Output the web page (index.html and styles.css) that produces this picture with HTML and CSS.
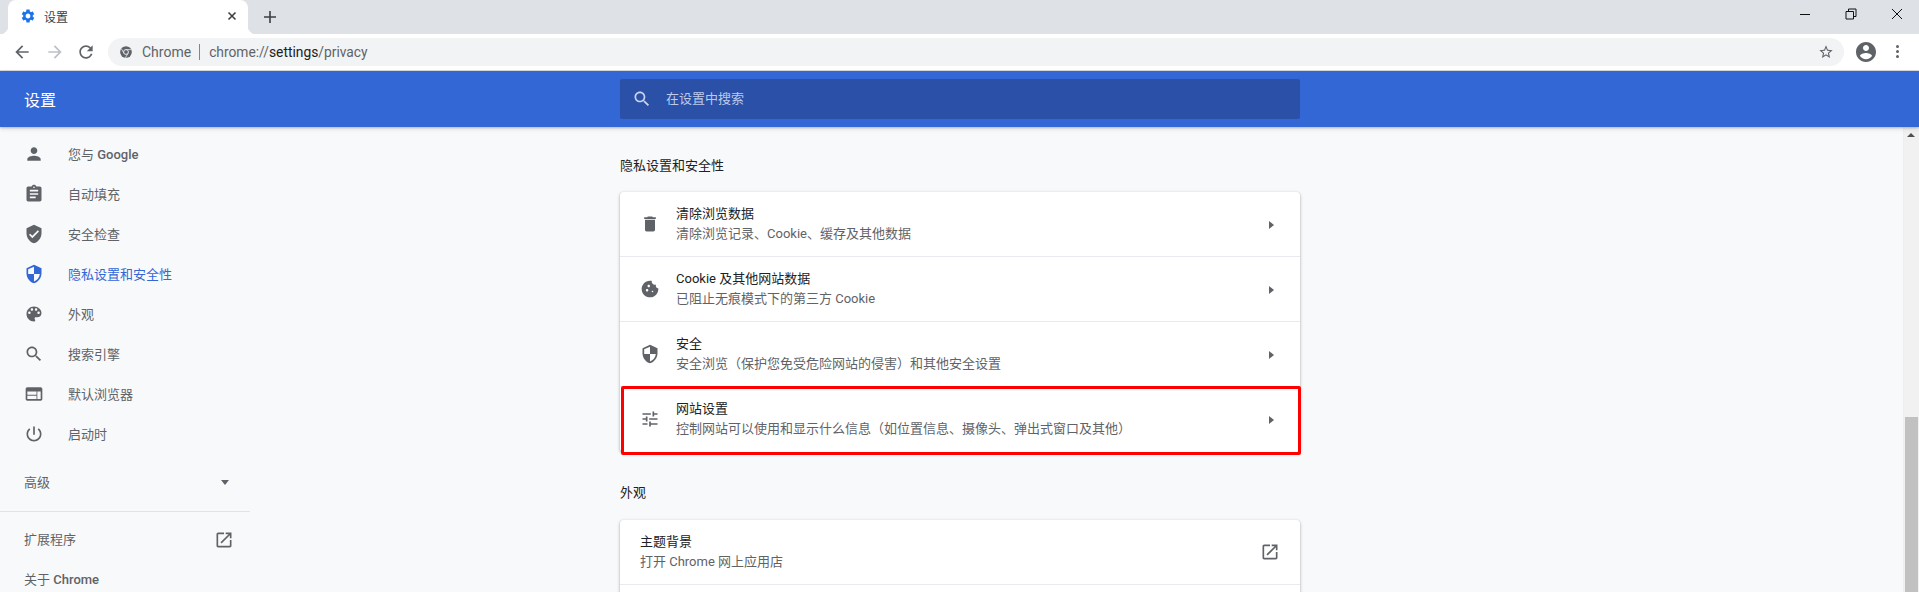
FILE: index.html
```html
<!DOCTYPE html>
<html lang="zh-CN">
<head>
  <meta charset="UTF-8">
  <title>设置</title>
  <link rel="stylesheet" href="styles.css">
</head>
<body>
  <!-- Tab strip -->
  <div class="strip">
    <div class="tab">
      <svg class="favicon" viewBox="0 0 24 24"><path d="M19.14 12.94c.04-.3.06-.61.06-.94 0-.32-.02-.64-.07-.94l2.03-1.58c.18-.14.23-.41.12-.61l-1.92-3.32c-.12-.22-.37-.29-.59-.22l-2.39.96c-.5-.38-1.03-.7-1.62-.94l-.36-2.54c-.04-.24-.24-.41-.48-.41h-3.84c-.24 0-.43.17-.47.41l-.36 2.54c-.59.24-1.13.57-1.62.94l-2.39-.96c-.22-.08-.47 0-.59.22L2.74 8.87c-.12.21-.08.47.12.61l2.03 1.58c-.05.3-.09.63-.09.94s.02.64.07.94l-2.03 1.58c-.18.14-.23.41-.12.61l1.92 3.32c.12.22.37.29.59.22l2.39-.96c.5.38 1.03.7 1.62.94l.36 2.54c.05.24.24.41.48.41h3.84c.24 0 .44-.17.47-.41l.36-2.54c.59-.24 1.13-.56 1.62-.94l2.39.96c.22.08.47 0 .59-.22l1.92-3.32c.12-.22.07-.47-.12-.61l-2.01-1.58zM12 15.6c-1.98 0-3.6-1.62-3.6-3.6s1.62-3.6 3.6-3.6 3.6 1.62 3.6 3.6-1.62 3.6-3.6 3.6z"/></svg>
      <span class="tab-title">设置</span>
      <svg class="tab-close" viewBox="0 0 10 10"><path d="M1.5 1.5l7 7M8.5 1.5l-7 7"/></svg>
    </div>
    <svg class="new-tab" viewBox="0 0 12 12"><path d="M6 0v12M0 6h12"/></svg>
    <div class="window-buttons">
      <svg viewBox="0 0 12 12"><path d="M1 6.5h10"/></svg>
      <svg viewBox="0 0 12 12"><path d="M1 3.5h7.5v7.5H1zM3.5 3.5V1H11v7.5H8.5"/></svg>
      <svg viewBox="0 0 12 12"><path d="M1 1l10 10M11 1L1 11"/></svg>
    </div>
  </div>

  <!-- Toolbar -->
  <div class="toolbar">
    <svg class="tool" viewBox="0 0 24 24"><path d="M20 11H7.83l5.59-5.59L12 4l-8 8 8 8 1.41-1.41L7.83 13H20v-2z"/></svg>
    <svg class="tool tool-off" viewBox="0 0 24 24"><path d="M4 11h12.17l-5.59-5.59L12 4l8 8-8 8-1.41-1.41L16.17 13H4v-2z"/></svg>
    <svg class="tool" viewBox="0 0 24 24"><path d="M17.65 6.35C16.2 4.9 14.21 4 12 4c-4.42 0-7.99 3.58-7.99 8s3.57 8 7.99 8c3.73 0 6.84-2.55 7.73-6h-2.08c-.82 2.33-3.04 4-5.65 4-3.31 0-6-2.69-6-6s2.69-6 6-6c1.66 0 3.14.69 4.22 1.78L13 11h7V4l-2.35 2.35z"/></svg>
    <div class="omnibox">
      <svg class="chrome-icon" viewBox="0 0 16 16">
        <circle cx="8" cy="8" r="7.8"/>
        <path class="chrome-cut" d="M8 4.8h7M5.2 9.6L1.8 3.6M10.8 9.6L7.2 15.6"/>
        <circle class="chrome-ring" cx="8" cy="8" r="3.2"/>
      </svg>
      <span class="site-name">Chrome</span>
      <span class="site-sep"></span>
      <span class="url">chrome://<b>settings</b>/privacy</span>
      <svg class="star" viewBox="0 0 24 24"><path d="M22 9.24l-7.19-.62L12 2 9.19 8.63 2 9.24l5.46 4.73L5.82 21 12 17.27 18.18 21l-1.63-7.03L22 9.24zM12 15.4l-3.76 2.27 1-4.28-3.32-2.88 4.38-.38L12 6.1l1.71 4.04 4.38.38-3.32 2.88 1 4.28L12 15.4z"/></svg>
    </div>
    <svg class="avatar" viewBox="2 2 20 20"><path d="M12 2C6.48 2 2 6.48 2 12s4.48 10 10 10 10-4.48 10-10S17.52 2 12 2zm0 3c1.66 0 3 1.34 3 3s-1.34 3-3 3-3-1.34-3-3 1.34-3 3-3zm0 14.2c-2.5 0-4.71-1.28-6-3.22.03-1.99 4-3.08 6-3.08 1.99 0 5.97 1.09 6 3.08-1.29 1.94-3.5 3.22-6 3.22z"/></svg>
    <div class="dots"><i></i><i></i><i></i></div>
  </div>

  <!-- Settings header -->
  <div class="header">
    <div class="header-title">设置</div>
    <div class="search">
      <svg viewBox="0 0 24 24"><path d="M15.5 14h-.79l-.28-.27C15.41 12.59 16 11.11 16 9.5 16 5.91 13.09 3 9.5 3S3 5.91 3 9.5 5.91 16 9.5 16c1.61 0 3.09-.59 4.23-1.57l.27.28v.79l5 4.99L20.49 19l-4.99-5zm-6 0C7.01 14 5 11.99 5 9.5S7.01 5 9.5 5 14 7.01 14 9.5 11.99 14 9.5 14z"/></svg>
      <span>在设置中搜索</span>
    </div>
  </div>

  <div class="page">
    <!-- Sidebar -->
    <div class="sidebar">
      <div class="nav-item">
        <svg viewBox="0 0 24 24"><path d="M12 12c2.21 0 4-1.79 4-4s-1.79-4-4-4-4 1.79-4 4 1.79 4 4 4zm0 2c-2.67 0-8 1.34-8 4v2h16v-2c0-2.66-5.33-4-8-4z"/></svg>
        <span>您与 <b>Google</b></span>
      </div>
      <div class="nav-item">
        <svg viewBox="0 0 24 24"><path d="M19 3h-4.18C14.4 1.84 13.3 1 12 1c-1.3 0-2.4.84-2.82 2H5c-1.1 0-2 .9-2 2v14c0 1.1.9 2 2 2h14c1.1 0 2-.9 2-2V5c0-1.1-.9-2-2-2zm-7 0c.55 0 1 .45 1 1s-.45 1-1 1-1-.45-1-1 .45-1 1-1zm2 14H7v-2h7v2zm3-4H7v-2h10v2zm0-4H7V7h10v2z"/></svg>
        <span>自动填充</span>
      </div>
      <div class="nav-item">
        <svg viewBox="0 0 24 24"><path d="M12 1L3 5v6c0 5.55 3.84 10.74 9 12 5.16-1.26 9-6.45 9-12V5l-9-4zm-2 16l-4-4 1.41-1.41L10 14.17l6.59-6.59L18 9l-8 8z"/></svg>
        <span>安全检查</span>
      </div>
      <div class="nav-item active">
        <svg viewBox="0 0 24 24"><path d="M12 1L3 5v6c0 5.55 3.84 10.74 9 12 5.16-1.26 9-6.45 9-12V5l-9-4zm0 10.99h7c-.53 4.12-3.28 7.79-7 8.94V12H5V6.3l7-3.11v8.8z"/></svg>
        <span>隐私设置和安全性</span>
      </div>
      <div class="nav-item">
        <svg viewBox="0 0 24 24"><path d="M12 3c-4.97 0-9 4.03-9 9s4.03 9 9 9c.83 0 1.5-.67 1.5-1.5 0-.39-.15-.74-.39-1.01-.23-.26-.38-.61-.38-.99 0-.83.67-1.5 1.5-1.5H16c2.76 0 5-2.24 5-5 0-4.42-4.03-8-9-8zm-5.5 9c-.83 0-1.5-.67-1.5-1.5S5.67 9 6.5 9 8 9.67 8 10.5 7.33 12 6.5 12zm3-4C8.67 8 8 7.33 8 6.5S8.67 5 9.5 5s1.5.67 1.5 1.5S10.33 8 9.5 8zm5 0c-.83 0-1.5-.67-1.5-1.5S13.67 5 14.5 5s1.5.67 1.5 1.5S15.33 8 14.5 8zm3 4c-.83 0-1.5-.67-1.5-1.5S16.67 9 17.5 9s1.5.67 1.5 1.5-.67 1.5-1.5 1.5z"/></svg>
        <span>外观</span>
      </div>
      <div class="nav-item">
        <svg viewBox="0 0 24 24"><path d="M15.5 14h-.79l-.28-.27C15.41 12.59 16 11.11 16 9.5 16 5.91 13.09 3 9.5 3S3 5.91 3 9.5 5.91 16 9.5 16c1.61 0 3.09-.59 4.23-1.57l.27.28v.79l5 4.99L20.49 19l-4.99-5zm-6 0C7.01 14 5 11.99 5 9.5S7.01 5 9.5 5 14 7.01 14 9.5 11.99 14 9.5 14z"/></svg>
        <span>搜索引擎</span>
      </div>
      <div class="nav-item">
        <svg viewBox="0 0 24 24"><path d="M20 4H4c-1.1 0-2 .9-2 2v12c0 1.1.9 2 2 2h16c1.1 0 2-.9 2-2V6c0-1.1-.9-2-2-2zm-5 14H4v-4h11v4zm0-5H4V9h11v4zm5 5h-4V9h4v9z"/></svg>
        <span>默认浏览器</span>
      </div>
      <div class="nav-item">
        <svg viewBox="0 0 24 24"><path d="M13 3h-2v10h2V3zm4.83 2.17l-1.42 1.42C17.99 7.86 19 9.81 19 12c0 3.87-3.13 7-7 7s-7-3.13-7-7c0-2.19 1.01-4.14 2.58-5.42L6.17 5.17C4.23 6.82 3 9.26 3 12c0 4.97 4.03 9 9 9s9-4.03 9-9c0-2.74-1.23-5.18-3.17-6.83z"/></svg>
        <span>启动时</span>
      </div>
      <div class="nav-advanced">
        <span>高级</span>
        <i class="caret"></i>
      </div>
      <div class="nav-group">
        <div class="nav-line">
          <span>扩展程序</span>
          <svg viewBox="0 0 24 24"><path d="M19 19H5V5h7V3H5c-1.11 0-2 .9-2 2v14c0 1.1.89 2 2 2h14c1.1 0 2-.9 2-2v-7h-2v7zM14 3v2h3.59l-9.83 9.83 1.41 1.41L19 6.41V10h2V3h-7z"/></svg>
        </div>
        <div class="nav-line">
          <span>关于 <b>Chrome</b></span>
        </div>
      </div>
    </div>

    <!-- Main column -->
    <div class="main">
      <div class="section-title">隐私设置和安全性</div>
      <div class="card">
        <div class="row">
          <svg class="row-icon" viewBox="0 0 24 24"><path d="M6 19c0 1.1.9 2 2 2h8c1.1 0 2-.9 2-2V7H6v12zM19 4h-3.5l-1-1h-5l-1 1H5v2h14V4z"/></svg>
          <div class="row-text">
            <div class="row-title">清除浏览数据</div>
            <div class="row-sub">清除浏览记录、Cookie、缓存及其他数据</div>
          </div>
          <i class="arrow"></i>
        </div>
        <div class="row">
          <svg class="row-icon" viewBox="0 0 24 24"><path d="M21.95 10.99c-1.79-.03-3.7-1.95-2.68-4.22-2.97 1-5.78-1.59-5.19-4.56C7.11.74 2 6.41 2 12c0 5.52 4.48 10 10 10 5.89 0 10.54-5.08 9.95-11.01zM8.5 15c-.83 0-1.5-.67-1.5-1.5S7.67 12 8.5 12s1.5.67 1.5 1.5S9.33 15 8.5 15zm2-5C9.67 10 9 9.33 9 8.5S9.67 7 10.5 7s1.5.67 1.5 1.5-.67 1.5-1.5 1.5zm4.5 6c-.55 0-1-.45-1-1s.45-1 1-1 1 .45 1 1-.45 1-1 1z"/></svg>
          <div class="row-text">
            <div class="row-title">Cookie 及其他网站数据</div>
            <div class="row-sub">已阻止无痕模式下的第三方 Cookie</div>
          </div>
          <i class="arrow"></i>
        </div>
        <div class="row">
          <svg class="row-icon" viewBox="0 0 24 24"><path d="M12 1L3 5v6c0 5.55 3.84 10.74 9 12 5.16-1.26 9-6.45 9-12V5l-9-4zm0 10.99h7c-.53 4.12-3.28 7.79-7 8.94V12H5V6.3l7-3.11v8.8z"/></svg>
          <div class="row-text">
            <div class="row-title">安全</div>
            <div class="row-sub">安全浏览（保护您免受危险网站的侵害）和其他安全设置</div>
          </div>
          <i class="arrow"></i>
        </div>
        <div class="row row-last">
          <svg class="row-icon" viewBox="0 0 24 24"><path d="M3 17v2h6v-2H3zM3 5v2h10V5H3zm10 16v-2h8v-2h-8v-2h-2v6h2zM7 9v2H3v2h4v2h2V9H7zm14 4v-2H11v2h10zm-6-4h2V7h4V5h-4V3h-2v6z"/></svg>
          <div class="row-text">
            <div class="row-title">网站设置</div>
            <div class="row-sub">控制网站可以使用和显示什么信息（如位置信息、摄像头、弹出式窗口及其他）</div>
          </div>
          <i class="arrow"></i>
          <div class="red-box"></div>
        </div>
      </div>

      <div class="section-title section-next">外观</div>
      <div class="card">
        <div class="row row-plain">
          <div class="row-text">
            <div class="row-title">主题背景</div>
            <div class="row-sub">打开 Chrome 网上应用店</div>
          </div>
          <svg class="row-open" viewBox="0 0 24 24"><path d="M19 19H5V5h7V3H5c-1.11 0-2 .9-2 2v14c0 1.1.89 2 2 2h14c1.1 0 2-.9 2-2v-7h-2v7zM14 3v2h3.59l-9.83 9.83 1.41 1.41L19 6.41V10h2V3h-7z"/></svg>
        </div>
        <div class="row row-plain"></div>
      </div>
    </div>

    <!-- Scrollbar -->
    <div class="scrollbar">
      <i class="scroll-up"></i>
      <div class="scroll-thumb"></div>
    </div>
  </div>
</body>
</html>
```

FILE: styles.css
```css
html, body {
  margin: 0;
  padding: 0;
  height: 592px;
  overflow: hidden;
}
body {
  font-family: Roboto, 'Noto Sans CJK SC', sans-serif;
  font-size: 13px;
  color: #202124;
  background: #f8f9fa;
}
b {
  font-weight: 500;
}
svg {
  display: block;
  fill: #5f6368;
  flex: none;
}

/* Tab strip */
.strip {
  height: 34px;
  background: #dee1e6;
  display: flex;
  align-items: center;
  padding-left: 8px;
}
.tab {
  width: 240px;
  height: 34px;
  box-sizing: border-box;
  background: #fff;
  border-radius: 8px 8px 0 0;
  display: flex;
  align-items: center;
  padding: 0 11px 2px 12px;
  position: relative;
}
.tab:before,
.tab:after {
  content: '';
  position: absolute;
  bottom: 0;
  width: 8px;
  height: 8px;
}
.tab:before {
  left: -8px;
  background: radial-gradient(circle at 0 0, #dee1e6 8px, #fff 8.5px);
}
.tab:after {
  right: -8px;
  background: radial-gradient(circle at 100% 0, #dee1e6 8px, #fff 8.5px);
}
.favicon {
  width: 16px;
  height: 16px;
  fill: #1a73e8;
}
.tab-title {
  flex: 1;
  margin-left: 8px;
  font-size: 12px;
  color: #3c4043;
}
.tab-close {
  width: 10px;
  height: 10px;
  fill: none;
  stroke: #3c4043;
  stroke-width: 1.6;
}
.new-tab {
  width: 12px;
  height: 12px;
  margin-left: 16px;
  fill: none;
  stroke: #3c4043;
  stroke-width: 1.6;
}
.window-buttons {
  margin-left: auto;
  margin-top: -6px;
  display: flex;
  gap: 34px;
  padding-right: 16px;
}
.window-buttons svg {
  width: 12px;
  height: 12px;
  fill: none;
  stroke: #111;
  stroke-width: 1;
}

/* Toolbar */
.toolbar {
  height: 37px;
  box-sizing: border-box;
  background: #fff;
  border-bottom: 1px solid #dadce0;
  display: flex;
  align-items: center;
  padding: 0 0 1px 12px;
}
.tool {
  width: 20px;
  height: 20px;
  margin-right: 13px;
}
.tool-off {
  fill: #bdc1c6;
  margin-right: 11px;
}
.toolbar .tool:nth-child(3) {
  margin-right: 12px;
}
.omnibox {
  flex: 1;
  height: 28px;
  background: #f1f3f4;
  border-radius: 14px;
  display: flex;
  align-items: center;
  padding: 0 10px 0 12px;
  font-size: 14px;
  color: #5f6368;
}
.chrome-icon {
  width: 12px;
  height: 12px;
}
.chrome-ring {
  fill: #5f6368;
  stroke: #f1f3f4;
  stroke-width: 1.3;
}
.chrome-cut {
  fill: none;
  stroke: #f1f3f4;
  stroke-width: 1;
}
.site-name {
  margin-left: 10px;
}
.site-sep {
  width: 1px;
  height: 16px;
  background: #80868b;
  margin: 0 9px 0 8px;
}
.url {
  flex: 1;
  font-size: 13.8px;
}
.url b {
  font-weight: 400;
  color: #202124;
}
.star {
  width: 16px;
  height: 16px;
}
.avatar {
  width: 20px;
  height: 20px;
  margin-left: 12px;
}
.dots {
  width: 4px;
  margin: 0 19px 0 20px;
  display: flex;
  flex-direction: column;
  gap: 2px;
}
.dots i {
  width: 3px;
  height: 3px;
  border-radius: 50%;
  background: #5f6368;
}

/* Header */
.header {
  height: 56px;
  background: #3367d6;
  display: flex;
  align-items: center;
  position: relative;
  z-index: 2;
  box-shadow: 0 1px 2px rgba(0, 0, 0, 0.2), 0 2px 5px rgba(0, 0, 0, 0.1);
}
.header-title {
  width: 620px;
  box-sizing: border-box;
  padding-left: 24px;
  font-size: 16px;
  color: #fff;
}
.search {
  width: 680px;
  height: 40px;
  background: #2a50a8;
  border-radius: 2px;
  display: flex;
  align-items: center;
  padding-left: 12px;
  box-sizing: border-box;
  color: #bccaeb;
}
.search svg {
  width: 20px;
  height: 20px;
  fill: #c8d4ee;
}
.search span {
  margin: 0 0 4px 14px;
}

/* Page body */
.page {
  height: 465px;
  display: flex;
  overflow: hidden;
}
.sidebar {
  width: 250px;
  padding-top: 7px;
  color: #5f6368;
  flex: none;
}
.nav-item {
  height: 40px;
  display: flex;
  align-items: center;
  padding-left: 24px;
  gap: 24px;
}
.nav-item span {
  margin-bottom: 2px;
}
.nav-item svg {
  width: 20px;
  height: 20px;
}
.nav-item.active {
  color: #3367d6;
}
.nav-item.active svg {
  fill: #3367d6;
}
.nav-advanced {
  height: 48px;
  margin-top: 4px;
  margin-bottom: 5px;
  display: flex;
  align-items: center;
  justify-content: space-between;
  padding: 0 21px 0 24px;
}
.nav-advanced span {
  margin-bottom: 2px;
}
.caret {
  width: 0;
  height: 0;
  border-left: 4.5px solid transparent;
  border-right: 4.5px solid transparent;
  border-top: 5px solid #5f6368;
}
.nav-group {
  border-top: 1px solid #e0e3e7;
  padding-top: 8px;
}
.nav-line {
  height: 40px;
  display: flex;
  align-items: center;
  justify-content: space-between;
  padding: 0 16px 0 24px;
}
.nav-line span {
  margin-bottom: 4px;
}
.nav-line svg {
  width: 20px;
  height: 20px;
}
.main {
  width: 680px;
  margin-left: 370px;
  flex: none;
}
.section-title {
  line-height: 20px;
  margin: 29px 0 16px;
}
.section-next {
  margin: 31px 0 17px;
}
.card {
  background: #fff;
  border-radius: 4px;
  box-shadow: 0 1px 2px rgba(60, 64, 67, 0.3), 0 1px 3px 1px rgba(60, 64, 67, 0.15);
}
.row {
  height: 65px;
  box-sizing: border-box;
  border-bottom: 1px solid #e8eaed;
  display: flex;
  align-items: center;
  padding: 0 20px;
  position: relative;
}
.row-last {
  border-bottom: none;
  padding-bottom: 1px;
}
.row-icon {
  width: 20px;
  height: 20px;
  margin-right: 16px;
}
.row-text {
  flex: 1;
  line-height: 20px;
}
.row-sub {
  color: #5f6368;
}
.arrow {
  width: 0;
  height: 0;
  border-top: 4.5px solid transparent;
  border-bottom: 4.5px solid transparent;
  border-left: 5px solid #5f6368;
  margin: 1px 6px 0 0;
}
.row-open {
  width: 20px;
  height: 20px;
}
.red-box {
  position: absolute;
  top: -1px;
  left: 1px;
  right: -1px;
  bottom: -3px;
  border: 3px solid #f00;
  border-radius: 2px;
}

/* Scrollbar */
.scrollbar {
  width: 16px;
  margin-left: auto;
  background: #f1f1f1;
  border-left: 1px solid #eee;
  box-sizing: border-box;
  flex: none;
  position: relative;
}
.scroll-up {
  display: block;
  width: 0;
  height: 0;
  margin: 6px 0 0 3px;
  border-left: 4px solid transparent;
  border-right: 4px solid transparent;
  border-bottom: 4px solid #505050;
}
.scroll-thumb {
  width: 13px;
  height: 175px;
  margin: 280px 0 0 1px;
  background: #c1c1c1;
}
```
